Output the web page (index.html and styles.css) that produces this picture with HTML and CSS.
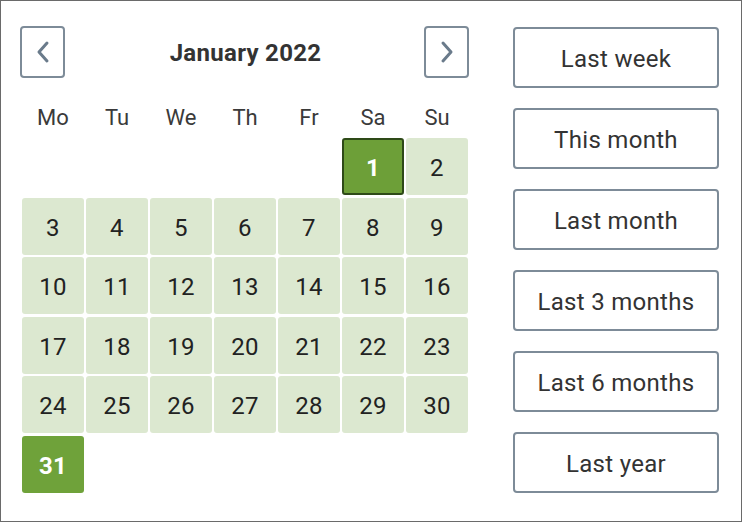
FILE: index.html
```html
<!DOCTYPE html>
<html>
<head>
<meta charset="utf-8">
<link rel="stylesheet" href="styles.css">
</head>
<body>
<div class="frame">
  <div class="calendar">
    <div class="cal-head">
      <button class="nav" aria-label="Previous month">
        <svg width="16" height="24" viewBox="0 0 16 24"><polyline points="12,3 4,12 12,21" fill="none" stroke="#6a7b8b" stroke-width="3" stroke-linecap="round" stroke-linejoin="round"/></svg>
      </button>
      <div class="title">January 2022</div>
      <button class="nav" aria-label="Next month">
        <svg width="16" height="24" viewBox="0 0 16 24"><polyline points="4,3 12,12 4,21" fill="none" stroke="#6a7b8b" stroke-width="3" stroke-linecap="round" stroke-linejoin="round"/></svg>
      </button>
    </div>
    <div class="weekdays">
      <span>Mo</span><span>Tu</span><span>We</span><span>Th</span><span>Fr</span><span>Sa</span><span>Su</span>
    </div>
    <div class="days">
      <span class="empty"></span><span class="empty"></span><span class="empty"></span><span class="empty"></span><span class="empty"></span>
      <span class="day start">1</span><span class="day">2</span>
      <span class="day">3</span><span class="day">4</span><span class="day">5</span><span class="day">6</span><span class="day">7</span><span class="day">8</span><span class="day">9</span>
      <span class="day">10</span><span class="day">11</span><span class="day">12</span><span class="day">13</span><span class="day">14</span><span class="day">15</span><span class="day">16</span>
      <span class="day">17</span><span class="day">18</span><span class="day">19</span><span class="day">20</span><span class="day">21</span><span class="day">22</span><span class="day">23</span>
      <span class="day">24</span><span class="day">25</span><span class="day">26</span><span class="day">27</span><span class="day">28</span><span class="day">29</span><span class="day">30</span>
      <span class="day end">31</span>
    </div>
  </div>
  <div class="presets">
    <button class="preset">Last week</button>
    <button class="preset">This month</button>
    <button class="preset">Last month</button>
    <button class="preset">Last 3 months</button>
    <button class="preset">Last 6 months</button>
    <button class="preset">Last year</button>
  </div>
</div>
</body>
</html>
```
FILE: styles.css
```css
* { box-sizing: border-box; }
html, body { margin: 0; padding: 0; background: #fff; }
body { font-family: Roboto, "Liberation Sans", sans-serif; color: #2b2b2b; }

.frame {
  width: 742px;
  height: 522px;
  border: 1px solid #6a6a6a;
  padding: 25px 0 0 19px;
  display: flex;
  gap: 44px;
}

.calendar { width: 449px; }

.cal-head {
  height: 52px;
  display: flex;
  align-items: center;
  justify-content: space-between;
}

.nav {
  width: 45px;
  height: 52px;
  border: 2px solid #7d8b98;
  border-radius: 4px;
  background: #fff;
  padding: 0;
  display: flex;
  align-items: center;
  justify-content: center;
}

.title {
  font-size: 24px;
  letter-spacing: 0.3px;
  font-weight: 700;
  color: #333;
  padding-left: 2px;
  padding-top: 1px;
}

.weekdays {
  margin: 29px 2px 9px 2px;
  display: grid;
  grid-template-columns: repeat(7, 62px);
  column-gap: 2px;
  font-size: 22px;
  line-height: 22px;
  color: #3a3a3a;
  text-align: center;
}

.days {
  margin: 0 1px 0 2px;
  display: grid;
  grid-template-columns: repeat(7, 62px);
  grid-auto-rows: 57px;
  column-gap: 2px;
  row-gap: 2.6px;
}

.day {
  background: #dce8d0;
  border-radius: 3px;
  display: flex;
  align-items: center;
  justify-content: center;
  padding-top: 3px;
  font-size: 24px;
  letter-spacing: 0.3px;
  color: #222;
}

.day.start {
  background: #6d9f38;
  border: 2px solid #2e4a18;
  color: #fff;
  font-weight: 700;
}

.day.end {
  background: #6fa23a;
  color: #fff;
  font-weight: 700;
}

.presets {
  width: 206px;
  padding-top: 1px;
  display: flex;
  flex-direction: column;
  gap: 20px;
}

.preset {
  height: 61px;
  border: 2px solid #7d8b98;
  border-radius: 4px;
  background: #fff;
  font-family: Roboto, "Liberation Sans", sans-serif;
  font-size: 24px;
  letter-spacing: 0.3px;
  color: #333;
  padding: 3px 0 0 0;
}
```
